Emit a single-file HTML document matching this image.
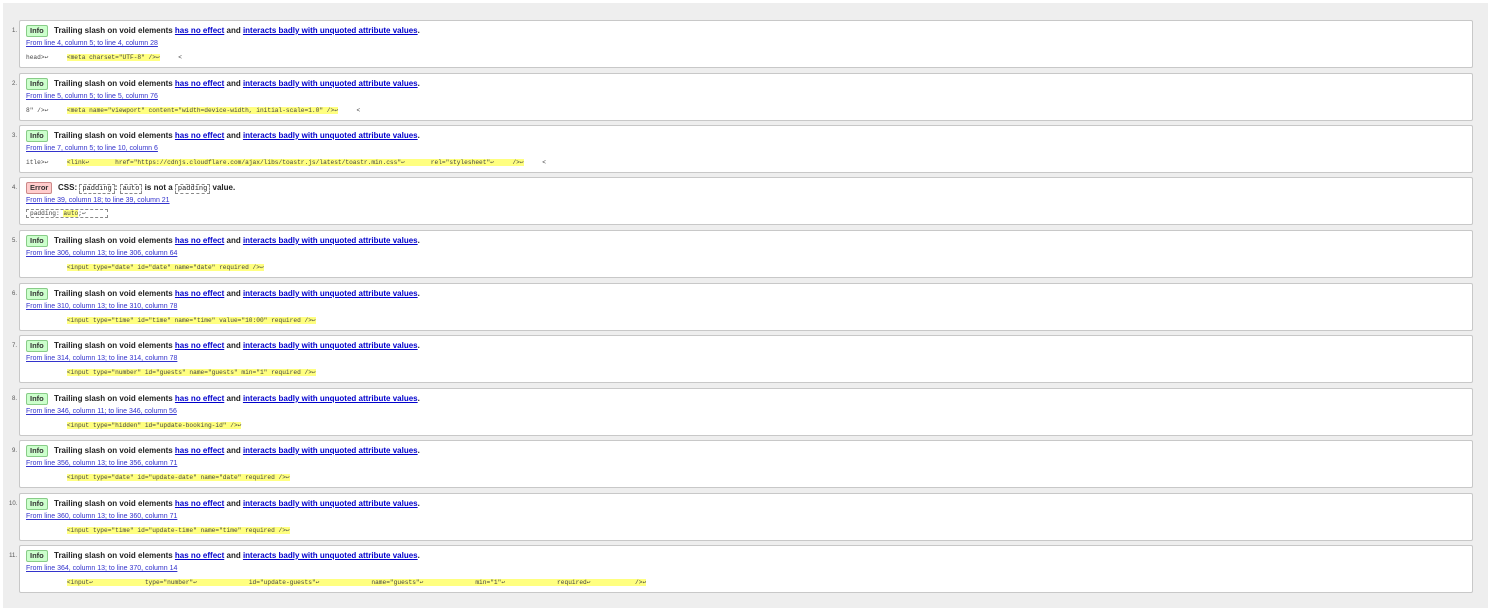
<!DOCTYPE html>
<html><head><meta charset="utf-8"><style>
body{margin:0;background:#fff;width:1488px;height:611px;overflow:hidden;font-family:"Liberation Sans",Arial,sans-serif}
#bg{position:absolute;left:3px;top:3px;width:1485px;height:605px;background:#eeeeee}
.card{position:absolute;left:19px;width:1452px;height:46px;background:#fff;border:1px solid #c8c8c8;border-radius:2px}
.n{position:absolute;left:-11px;top:7px;font-size:6px;color:#555;width:8px;text-align:right}
.b{position:absolute;left:6px;top:4px;height:10px;line-height:10px;padding:0 3px;font-size:7.5px;font-weight:bold;border:1px solid #8c8;background:#cfc;color:#333;border-radius:2px}
.b.e{background:#fcc;border-color:#c88}
.t{position:absolute;left:34px;top:5px;font-size:8px;font-weight:bold;color:#222;white-space:nowrap}
.t a{color:#00c;text-decoration:underline}
.l{position:absolute;left:6px;top:19px;font-size:7px;color:#33c;text-decoration:underline;white-space:nowrap}
.c{position:absolute;left:6px;top:33px;font-family:"Liberation Mono",monospace;font-size:6.2px;color:#444;white-space:pre}
.c b{font-weight:normal;background:#ffff80}
.d{border:1px dashed #888;padding:0 2px;font-family:"Liberation Mono",monospace;font-weight:normal;font-size:7px}
</style></head><body><div id="bg"></div>
<div class="card" style="top:20px"><span class="n">1.</span><span class="b">Info</span><span class="t">Trailing slash on void elements <a>has no effect</a> and <a>interacts badly with unquoted attribute values</a>.</span><span class="l">From line 4, column 5; to line 4, column 28</span><span class="c">head>↩     <b>&lt;meta charset="UTF-8" /&gt;↩</b>     &lt;</span></div>
<div class="card" style="top:73px"><span class="n">2.</span><span class="b">Info</span><span class="t">Trailing slash on void elements <a>has no effect</a> and <a>interacts badly with unquoted attribute values</a>.</span><span class="l">From line 5, column 5; to line 5, column 76</span><span class="c">8" />↩     <b>&lt;meta name="viewport" content="width=device-width, initial-scale=1.0" /&gt;↩</b>     &lt;</span></div>
<div class="card" style="top:125px"><span class="n">3.</span><span class="b">Info</span><span class="t">Trailing slash on void elements <a>has no effect</a> and <a>interacts badly with unquoted attribute values</a>.</span><span class="l">From line 7, column 5; to line 10, column 6</span><span class="c">itle>↩     <b>&lt;link↩       href="https://cdnjs.cloudflare.com/ajax/libs/toastr.js/latest/toastr.min.css"↩       rel="stylesheet"↩     /&gt;↩</b>     &lt;</span></div>
<div class="card" style="top:177px"><span class="n">4.</span><span class="b e">Error</span><span class="t" style="left:38px">CSS: <span class="d">padding</span>: <span class="d">auto</span> is not a <span class="d">padding</span> value.</span><span class="l">From line 39, column 18; to line 39, column 21</span><span class="c" style="border:1px dashed #888;padding:0 3px;top:31px">padding: <b>auto</b>;↩     </span></div>
<div class="card" style="top:230px"><span class="n">5.</span><span class="b">Info</span><span class="t">Trailing slash on void elements <a>has no effect</a> and <a>interacts badly with unquoted attribute values</a>.</span><span class="l">From line 306, column 13; to line 306, column 64</span><span class="c">           <b>&lt;input type="date" id="date" name="date" required /&gt;↩</b></span></div>
<div class="card" style="top:283px"><span class="n">6.</span><span class="b">Info</span><span class="t">Trailing slash on void elements <a>has no effect</a> and <a>interacts badly with unquoted attribute values</a>.</span><span class="l">From line 310, column 13; to line 310, column 78</span><span class="c">           <b>&lt;input type="time" id="time" name="time" value="10:00" required /&gt;↩</b></span></div>
<div class="card" style="top:335px"><span class="n">7.</span><span class="b">Info</span><span class="t">Trailing slash on void elements <a>has no effect</a> and <a>interacts badly with unquoted attribute values</a>.</span><span class="l">From line 314, column 13; to line 314, column 78</span><span class="c">           <b>&lt;input type="number" id="guests" name="guests" min="1" required /&gt;↩</b></span></div>
<div class="card" style="top:388px"><span class="n">8.</span><span class="b">Info</span><span class="t">Trailing slash on void elements <a>has no effect</a> and <a>interacts badly with unquoted attribute values</a>.</span><span class="l">From line 346, column 11; to line 346, column 56</span><span class="c">           <b>&lt;input type="hidden" id="update-booking-id" /&gt;↩</b></span></div>
<div class="card" style="top:440px"><span class="n">9.</span><span class="b">Info</span><span class="t">Trailing slash on void elements <a>has no effect</a> and <a>interacts badly with unquoted attribute values</a>.</span><span class="l">From line 356, column 13; to line 356, column 71</span><span class="c">           <b>&lt;input type="date" id="update-date" name="date" required /&gt;↩</b></span></div>
<div class="card" style="top:493px"><span class="n">10.</span><span class="b">Info</span><span class="t">Trailing slash on void elements <a>has no effect</a> and <a>interacts badly with unquoted attribute values</a>.</span><span class="l">From line 360, column 13; to line 360, column 71</span><span class="c">           <b>&lt;input type="time" id="update-time" name="time" required /&gt;↩</b></span></div>
<div class="card" style="top:545px"><span class="n">11.</span><span class="b">Info</span><span class="t">Trailing slash on void elements <a>has no effect</a> and <a>interacts badly with unquoted attribute values</a>.</span><span class="l">From line 364, column 13; to line 370, column 14</span><span class="c">           <b>&lt;input↩              type="number"↩              id="update-guests"↩              name="guests"↩              min="1"↩              required↩            /&gt;↩</b></span></div>
</body></html>
